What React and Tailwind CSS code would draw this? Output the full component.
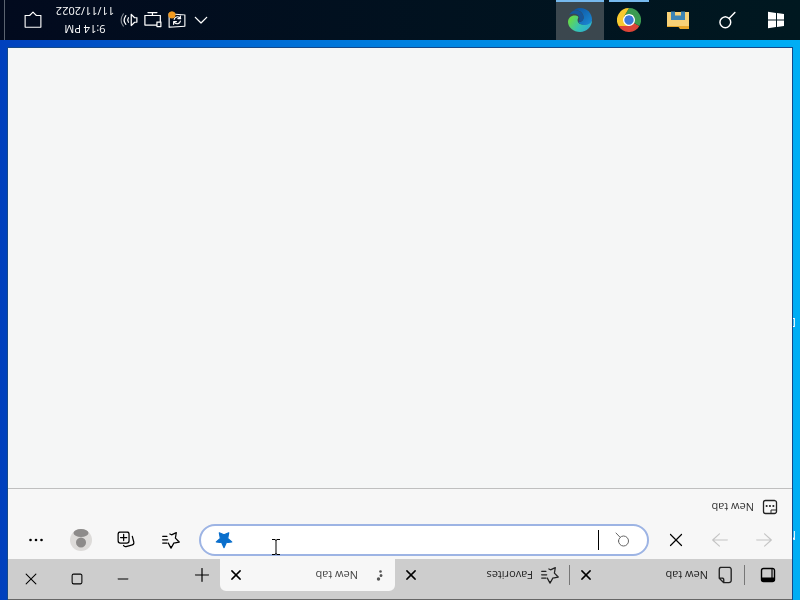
import { useState } from 'react'

const tabs = [
  { id: 1, title: 'New tab', icon: 'page' },
  { id: 2, title: 'Favorites', icon: 'favorites' },
  { id: 3, title: 'New tab', icon: 'loading' },
]

function Svg({ size = 16, className = '', children }) {
  return (
    <svg
      width={size}
      height={size}
      viewBox="0 0 16 16"
      fill="none"
      stroke="currentColor"
      strokeLinecap="round"
      strokeLinejoin="round"
      className={`shrink-0 ${className}`}
      aria-hidden="true"
    >
      {children}
    </svg>
  )
}

const CloseIcon = ({ size }) => (
  <Svg size={size}>
    <path d="M2.5 2.5l11 11M13.5 2.5l-11 11" strokeWidth="2" />
  </Svg>
)

const FavoritesIcon = () => (
  <Svg size={18}>
    <path d="M10.4 5.200L8 .7 5.500 5.200.7 6.200l3.400 3.500-.8 4.900 4.200-2 1.500.8M11.600 5.200h3.800M11 8.200h4.400M11.600 11.200h3.800" strokeWidth="1.100" />
  </Svg>
)

const TabIcon = ({ name }) => {
  if (name === 'favorites') return <FavoritesIcon />
  if (name === 'loading')
    return (
      <svg width="18" height="18" viewBox="0 0 18 18" fill="#555" className="shrink-0" aria-hidden="true">
        <circle cx="5.500" cy="5" r="1.700" />
        <circle cx="3" cy="8.500" r="1.400" />
        <circle cx="3.500" cy="12.500" r="1.300" />
      </svg>
    )
  return (
    <Svg size={18}>
      <path d="M4.5 1.2h4.6l4 4v7.6a2 2 0 0 1-2 2H4.5a2 2 0 0 1-2-2V3.2a2 2 0 0 1 2-2zM9.1 1.2v2.3c0 1 .6 1.7 1.7 1.7h2.3" strokeWidth="1.2" />
    </Svg>
  )
}

function TabStrip() {
  const [active, setActive] = useState(3)

  return (
    <div className="flex h-[41px] items-end border-t border-[#666] bg-[#cdcdcd]">
      <button type="button" aria-label="Tab actions" className="flex h-8 w-[47px] items-center justify-center">
        <Svg size={16}>
          <rect x="1.5" y="1.5" width="13" height="13" rx="2" strokeWidth="1.4" />
          <path d="M2 2.5h12v2.5H2z" fill="currentColor" />
          <path d="M4 5v9" strokeWidth="1.2" />
        </Svg>
      </button>
      <div className="flex w-[525px] items-end" role="tablist">
        {tabs.map((tab) => (
          <div
            key={tab.id}
            className={`relative flex h-8 min-w-0 flex-1 items-center rounded-t-md pr-2 pl-[11px] ${
              active === tab.id ? 'bg-[#f7f7f7]' : 'before:absolute before:left-0 before:h-5 before:w-px before:bg-[#777]'
            }`}
          >
            <button
              type="button"
              role="tab"
              aria-selected={active === tab.id}
              onClick={() => setActive(tab.id)}
              className={`flex min-w-0 flex-1 items-center gap-2 text-left text-[11px] ${active === tab.id ? 'text-[#444]' : 'text-[#222]'}`}
            >
              <TabIcon name={tab.icon} />
              <span className="truncate">{tab.title}</span>
            </button>
            <button type="button" aria-label="Close tab" className="flex size-4 items-center justify-center">
              <CloseIcon size={12} />
            </button>
          </div>
        ))}
      </div>
      <button type="button" aria-label="New tab" className="flex h-8 w-9 items-center justify-center">
        <Svg size={16}>
          <path d="M8 1.5v13M1.5 8h13" strokeWidth="1.2" />
        </Svg>
      </button>
      <div className="ml-auto flex h-full">
        <button type="button" aria-label="Minimize" className="flex w-[46px] items-center justify-center">
          <Svg size={12}>
            <path d="M1.5 8h13" strokeWidth="1.4" />
          </Svg>
        </button>
        <button type="button" aria-label="Maximize" className="flex w-[46px] items-center justify-center">
          <Svg size={12}>
            <rect x="1.5" y="1.5" width="13" height="13" rx="2" strokeWidth="1.4" />
          </Svg>
        </button>
        <button type="button" aria-label="Close" className="flex w-[46px] items-center justify-center">
          <Svg size={12}>
            <path d="M1.5 1.5l13 13M14.5 1.5l-13 13" strokeWidth="1.4" />
          </Svg>
        </button>
      </div>
    </div>
  )
}

function Toolbar() {
  const iconBtn = 'flex h-8 items-center justify-center'

  return (
    <div className="flex h-[38px] items-center px-1.5">
      <button type="button" aria-label="Back" disabled className={`${iconBtn} w-11 text-[#c4c4c4]`}>
        <Svg size={18}>
          <path d="M7.5 2.5L1.5 8l6 5.5M1.5 8h13" />
        </Svg>
      </button>
      <button type="button" aria-label="Forward" disabled className={`${iconBtn} w-11 text-[#c4c4c4]`}>
        <Svg size={18}>
          <path d="M8.5 2.5l6 5.5-6 5.5M14.5 8h-13" />
        </Svg>
      </button>
      <button type="button" aria-label="Stop" className={`${iconBtn} w-11`}>
        <Svg size={16}>
          <path d="M2.500 2.500l11 11M13.500 2.500l-11 11" strokeWidth="1.200" />
        </Svg>
      </button>
      <div className="mx-[5px] flex h-8 min-w-0 flex-1 items-center rounded-full border-2 border-[#9db4e4] bg-white pr-3.5 pl-4">
        <Svg size={16} className="text-[#666]">
          <circle cx="7.500" cy="7" r="5" />
          <path d="M11 10.800L15 15" />
        </Svg>
        <input
          type="text"
          aria-label="Address bar"
          autoFocus
          className="ml-4 h-5 min-w-0 flex-1 border-l border-black bg-transparent text-sm caret-transparent outline-none"
        />
        <button type="button" aria-label="Edit favorite" className="text-[#0a6fcc]">
          <Svg size={18}>
            <path d="M8 1.2l2 4.4 4.9.6-3.6 3.3.9 4.9L8 12.600l-4.2 1.800.9-4.9L1.1 6.2 6 5.6z" fill="currentColor" />
          </Svg>
        </button>
      </div>
      <button type="button" aria-label="Favorites" className={`${iconBtn} w-[45px]`}>
        <FavoritesIcon />
      </button>
      <button type="button" aria-label="Collections" className={`${iconBtn} w-[45px]`}>
        <Svg size={18}>
          <rect x="5.3" y="5.3" width="9.7" height="9.7" rx="2" strokeWidth="1.1" />
          <path d="M10.1 7.5v5.4M7.4 10.2h5.4M2.4 11.2l-1.3-5A2.4 2.4 0 0 1 3 3.4l5-1.3c1-.2 1.8.2 2.2 1" strokeWidth="1.1" />
        </Svg>
      </button>
      <button type="button" aria-label="Profile" className={`${iconBtn} w-[45px]`}>
        <svg width="22" height="22" viewBox="0 0 22 22" aria-hidden="true">
          <circle cx="11" cy="11" r="11" fill="#dddbd9" />
          <circle cx="11" cy="8.5" r="5" fill="#8d8b8a" />
          <ellipse cx="11" cy="18" rx="7.5" ry="4" fill="#8d8b8a" />
        </svg>
      </button>
      <button type="button" aria-label="Settings and more" className={`${iconBtn} w-[45px]`}>
        <svg width="16" height="16" viewBox="0 0 16 16" aria-hidden="true">
          <circle cx="2.5" cy="8" r="1.3" />
          <circle cx="8" cy="8" r="1.3" />
          <circle cx="13.5" cy="8" r="1.3" />
        </svg>
      </button>
    </div>
  )
}

function FavoritesBar() {
  return (
    <div className="flex h-[33px] items-center border-b border-[#bfbfbf] px-3.5 pb-1">
      <a href="#" className="flex items-center gap-2 text-[11px] text-[#333]">
        <Svg size={16} className="text-[#222]">
          <rect x="1.5" y="1.5" width="13" height="13" rx="2" strokeWidth="1.3" />
          <path d="M2 5h5V2.5" />
          <path d="M4.6 9h.1M8 9h.1M11.3 9h.1" strokeWidth="2" />
        </Svg>
        New tab
      </a>
    </div>
  )
}

const EdgeLogo = () => (
  <svg width="26" height="26" viewBox="0 0 26 26" aria-hidden="true">
    <defs>
      <linearGradient id="edgeTop" x1="0" y1="0" x2="1" y2="0.5">
        <stop offset="0" stopColor="#2aa5dc" />
        <stop offset=".55" stopColor="#35c3b4" />
        <stop offset="1" stopColor="#62d850" />
      </linearGradient>
      <linearGradient id="edgeBottom" x1="0" y1="0" x2="1" y2="1">
        <stop offset="0" stopColor="#1b8bd6" />
        <stop offset="1" stopColor="#0d4f9c" />
      </linearGradient>
    </defs>
    <path d="M1 13C1 6 6.500 1 13 1s12 4.500 12 10c0 4-3 6.500-6.500 6.500-3 0-4.500-1.200-3.500-2.700 1.500-2.800-.5-6.300-4.500-6.300C6 8.500 2 10 1 13z" fill="url(#edgeTop)" />
    <path d="M1 13c1-3.500 4.500-5.500 8.500-5 2.500.3 4.500 1.500 5 3-3-.5-5.500 2-5 5.500.6 4 5 7.500 10 6C17 24.500 15 25 13 25 6 25 1 20 1 13z" fill="url(#edgeBottom)" />
    <path d="M9.600 14.500c-.8 5 4.400 9 9.400 8 2-.8 3.800-2.300 4.800-4.200-4.500 2.200-9.800.7-10.200-3.300-.1-1.700.7-2.800 1-4-2.500-.4-4.600 1-5 3.500z" fill="#17569a" />
  </svg>
)

const ChromeLogo = () => (
  <svg width="24" height="24" viewBox="0 0 24 24" aria-hidden="true">
    <path d="M12 12L1.600 6A12 12 0 0 1 22.400 6z" fill="#dc4437" />
    <path d="M12 12L1.600 6A12 12 0 0 0 12 24l5.200-9z" fill="#3b9b51" />
    <path d="M12 12l5.200 3L12 24A12 12 0 0 0 22.400 6H12z" fill="#f7c92f" />
    <circle cx="12" cy="12" r="6" fill="#fff" />
    <circle cx="12" cy="12" r="4.700" fill="#3b78d8" />
  </svg>
)

const ExplorerLogo = () => (
  <svg width="22" height="20" viewBox="0 0 22 20" aria-hidden="true">
    <path d="M0 1h9l1.500 2H22v15H0z" fill="#e9a82c" />
    <path d="M0 4h22v14H0z" fill="#f8d177" />
    <path d="M4 18.500v-8.500h14v8.500h-4v-4H8v4z" fill="#3e84b4" />
  </svg>
)

function Taskbar() {
  const app = 'flex h-full w-12 items-center justify-center'

  return (
    <footer className="flex h-10 shrink-0 items-center gap-px bg-linear-to-r from-[#001820] to-[#020a1e] text-white">
      <button type="button" aria-label="Start" className={app}>
        <svg width="18" height="18" viewBox="0 0 18 18" fill="#fff" aria-hidden="true">
          <path d="M1 3l7-1v6.500H1zM9 1.900l8-1.100v7.700H9zM1 9.500h7V16l-7-1zM9 9.500h8v7.700l-8-1.100z" />
        </svg>
      </button>
      <button type="button" aria-label="Search" className={app}>
        <Svg size={18}>
          <circle cx="9.500" cy="6" r="4.800" strokeWidth="1.300" />
          <path d="M6 9.500L1 14.700" strokeWidth="1.300" />
        </Svg>
      </button>
      <button type="button" aria-label="File Explorer" className={app}>
        <ExplorerLogo />
      </button>
      <button type="button" aria-label="Google Chrome" className={`${app} relative after:absolute after:inset-x-1 after:bottom-0 after:h-0.5 after:bg-[#76b9ed]`}>
        <ChromeLogo />
      </button>
      <button type="button" aria-label="Microsoft Edge" className={`${app} border-b-2 border-[#76b9ed] bg-[#3b474e] pt-0.5`}>
        <EdgeLogo />
      </button>
      <div className="ml-auto flex h-full items-center">
        <button type="button" aria-label="Show hidden icons" className="flex w-6 justify-center">
          <Svg size={14}>
            <path d="M1.500 11L8 4.500l6.500 6.500" strokeWidth="1.500" />
          </Svg>
        </button>
        <button type="button" aria-label="Windows Update" className="flex w-6 justify-center">
          <Svg size={18}>
            <path d="M1 2.500l14-1v12l-14-1z" />
            <path d="M5 7a3 3 0 0 1 5-1.500l1 1M11 4v2.500H8.500M10.500 8.500a3 3 0 0 1-5 1.500l-.8-.8M5 11.500V9.200h2.300" />
            <circle cx="12.500" cy="12.500" r="3.200" fill="#f29a1f" stroke="none" />
          </Svg>
        </button>
        <button type="button" aria-label="Network" className="flex w-6 justify-center">
          <Svg size={18}>
            <path d="M4.500 3.500h10.700v8.500H1.500V6M8.500 12v2.500M4.500 14.500h8M1 2.200h3.500v4H1z" strokeWidth="1.100" />
          </Svg>
        </button>
        <button type="button" aria-label="Volume" className="flex w-6 justify-center">
          <Svg size={18}>
            <path d="M1 6v4h2L6 13V3L3 6zM8.500 6a3.500 3.500 0 0 1 0 4M10.800 4.200a6 6 0 0 1 0 7.600" strokeWidth="1.100" />
            <path d="M13 2.500a8.500 8.500 0 0 1 0 11" className="opacity-50" />
          </Svg>
        </button>
        <button type="button" className="flex w-16 flex-col items-center text-[11px] leading-[18px]">
          <span>9:14 PM</span>
          <span>11/11/2022</span>
        </button>
        <button type="button" aria-label="Notifications" className="mr-3 ml-1 flex w-8 justify-center">
          <Svg size={18}>
            <path d="M1 1.500h14v10.500h-4L8 15l-3-3H1z" />
          </Svg>
        </button>
        <div className="h-full w-[5px] border-l border-[#5b6370]" />
      </div>
    </footer>
  )
}

export default function App() {
  return (
    <div className="flex h-screen rotate-180 flex-col overflow-hidden bg-linear-to-r from-[#00aef5] via-[#0080e0] to-[#0040bd] font-['Open_Sans','Noto_Sans',sans-serif] text-black">
      <div className="relative flex min-h-0 flex-1 pb-2">
        {/* desktop shortcut names showing at the window's edge */}
        <div className="absolute inset-y-0 left-0 w-2 overflow-hidden pl-1 text-xs text-white">
          <p className="pt-[57px] leading-4">N</p>
          <p className="pt-[197px] leading-4">D</p>
        </div>
        <main className="relative mx-2 flex min-w-0 flex-1 flex-col bg-[#f7f7f7] outline outline-[#14498a]">
          <TabStrip />
          <Toolbar />
          <FavoritesBar />
          <section className="flex-1 bg-[#f5f6f6]" />
          {/* mouse pointer */}
          <svg width="8" height="16" viewBox="0 0 8 16" fill="none" stroke="#000" className="absolute top-[45px] right-[264px]" aria-hidden="true">
            <path d="M0 .5h3M5 .5h3M0 15.500h3M5 15.500h3M3 1h2M3 15h2M4 1v14" />
          </svg>
        </main>
      </div>
      <Taskbar />
    </div>
  )
}
